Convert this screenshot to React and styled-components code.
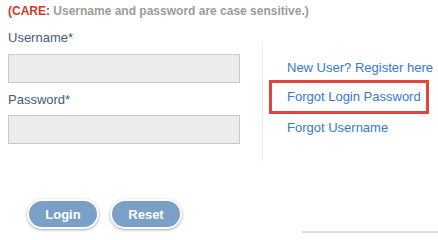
import React from "react";
import styled, { createGlobalStyle } from "styled-components";

const GlobalStyle = createGlobalStyle`
    body {
        margin: 0;
        background: #ffffff;
        font-family: "Liberation Sans", Arial, sans-serif;
    }
`;

const Page = styled.div`
    width: 438px;
    height: 233px;
    overflow: hidden;
    padding-left: 8px;
    box-sizing: border-box;
`;

const Note = styled.div`
    padding-top: 3px;
    font-size: 12px;
    line-height: 16px;
    font-weight: bold;
    color: #9b9b9b;
    white-space: nowrap;
`;

const Care = styled.span`
    color: #cf3a26;
`;

const FormRow = styled.div`
    display: flex;
    align-items: flex-start;
`;

const Fields = styled.div`
    width: 232px;
    padding-top: 11px;
    margin-right: 22px;
`;

const Label = styled.label`
    display: block;
    font-size: 13px;
    line-height: 16px;
    color: #415d80;
    margin-bottom: ${(p) => p.$gap}px;
`;

const Input = styled.input`
    display: block;
    box-sizing: border-box;
    width: 232px;
    height: 29px;
    margin: 0 0 ${(p) => p.$after}px;
    border: 1px solid #c9c9c9;
    background: #ececec;
    outline: none;
`;

const Side = styled.div`
    margin-top: 23px;
    border-left: 1px solid #ececec;
    padding: 18px 0 26px 6px;
    display: flex;
    flex-direction: column;
    align-items: flex-start;
`;

const LinkItem = styled.a`
    display: inline-block;
    font-size: 13px;
    line-height: 16px;
    color: #3479d3;
    text-decoration: none;
    white-space: nowrap;
    margin-top: ${(p) => p.$top}px;
    padding: ${(p) => (p.$boxed ? "6px 5px 6px 15px" : "0 0 0 18px")};
    border: ${(p) => (p.$boxed ? "3px solid #e4443c" : "none")};
`;

const Buttons = styled.div`
    display: flex;
    gap: 11px;
    margin-top: 37px;
    padding-left: 19px;
`;

const Pill = styled.button`
    width: 72px;
    height: 30px;
    box-sizing: border-box;
    border: 2px solid #ffffff;
    border-radius: 15px;
    background: #7aa0c7;
    box-shadow: 0 1px 3px rgba(0, 0, 0, 0.35);
    color: #ffffff;
    font-family: "Liberation Sans", Arial, sans-serif;
    font-size: 13px;
    font-weight: bold;
    padding: 0;
    cursor: pointer;
`;

const Footer = styled.div`
    margin: 2px 0 0 294px;
    height: 2px;
    background: linear-gradient(#e4e4e4, #d6d6d6);
`;

export default function App() {
    return (
        <>
            <GlobalStyle />
            <Page>
                <Note>
                    <Care>(CARE:</Care> Username and password are case sensitive.)
                </Note>
                <FormRow>
                    <Fields>
                        <Label $gap={8}>Username*</Label>
                        <Input $after={9} />
                        <Label $gap={7}>Password*</Label>
                        <Input type="password" $after={0} />
                    </Fields>
                    <Side>
                        <LinkItem href="#" $top={0}>New User? Register here</LinkItem>
                        <LinkItem href="#" $top={4} $boxed>Forgot Login Password</LinkItem>
                        <LinkItem href="#" $top={6}>Forgot Username</LinkItem>
                    </Side>
                </FormRow>
                <Buttons>
                    <Pill>Login</Pill>
                    <Pill>Reset</Pill>
                </Buttons>
                <Footer />
            </Page>
        </>
    );
}
